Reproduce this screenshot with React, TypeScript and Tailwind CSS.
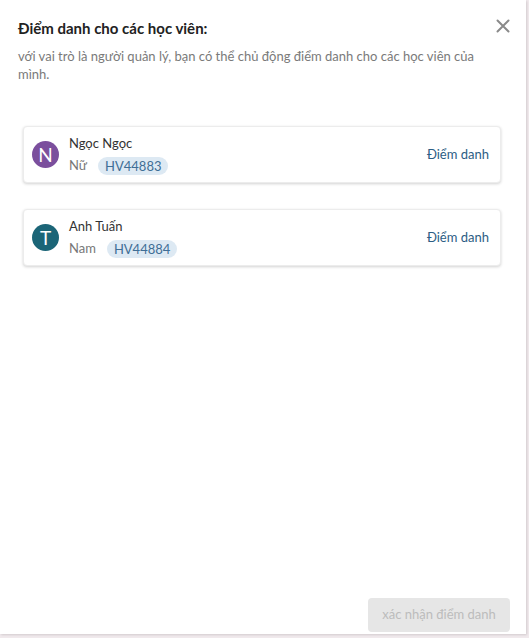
import React from "react";

type Student = {
  initial: string;
  name: string;
  gender: string;
  code: string;
  color: string;
};

const students: Student[] = [
  { initial: "N", name: "Ngọc Ngọc", gender: "Nữ", code: "HV44883", color: "bg-[#7b4f9d]" },
  { initial: "T", name: "Anh Tuấn", gender: "Nam", code: "HV44884", color: "bg-[#1b6577]" },
];

const StudentCard: React.FC<{ s: Student }> = ({ s }) => (
  <div className="flex items-center h-[57px] pl-[8px] pr-[11px] bg-white rounded-[4px] border border-[#ececec] shadow-[0_1px_3px_rgba(0,0,0,0.18)]">
    <div
      className={`w-[27px] h-[27px] rounded-full ${s.color} text-white flex items-center justify-center text-[19px] leading-none`}
    >
      {s.initial}
    </div>
    <div className="ml-[10px] flex flex-col gap-[4px] flex-1 pt-[1px]">
      <div className="text-[13px] leading-[17px] text-[#333]">{s.name}</div>
      <div className="flex items-center gap-[11px] text-[13px] text-[#777]">
        <span>{s.gender}</span>
        <span className="px-[7px] h-[18px] leading-[18px] rounded-full bg-[#dde9f3] text-[#3f6e96]">
          {s.code}
        </span>
      </div>
    </div>
    <button className="text-[13px] text-[#2c5d84]">Điểm danh</button>
  </div>
);

export default function App() {
  return (
    <div
      className="w-[529px] h-[638px] bg-[#f0e9ec] overflow-hidden"
      style={{ fontFamily: "Lato, 'Open Sans', sans-serif" }}
    >
      <div className="w-[526px] h-[634px] bg-white shadow-[1px_1px_2px_rgba(0,0,0,0.12)] flex flex-col">
        <div className="flex items-start justify-between pl-[18px] pr-[16px] pt-[18px]">
          <h1 className="text-[15px] font-bold text-[#222] leading-[20px]">
            Điểm danh cho các học viên:
          </h1>
          <svg width="14" height="14" viewBox="0 0 14 14" className="mt-[1px]">
            <path d="M1.5 1.5 L12.5 12.5 M12.5 1.5 L1.5 12.5" stroke="#8a8a8a" strokeWidth="2" strokeLinecap="round" />
          </svg>
        </div>
        <p className="pl-[18px] pr-[20px] mt-[9px] text-[13px] leading-[18px] text-[#7a7a7a]">
          với vai trò là người quản lý, bạn có thể chủ động điểm danh cho các học viên của mình.
        </p>
        <div className="mt-[43px] ml-[23px] w-[478px] flex flex-col gap-[26px]">
          {students.map((s) => (
            <StudentCard key={s.code} s={s} />
          ))}
        </div>
        <div className="flex-1" />
        <div className="flex justify-end pr-[16px] pb-[2px]">
          <button className="w-[142px] h-[34px] rounded-[4px] bg-[#e6e6e6] text-[13px] text-[#bcbcbc]">
            xác nhận điểm danh
          </button>
        </div>
      </div>
    </div>
  );
}
